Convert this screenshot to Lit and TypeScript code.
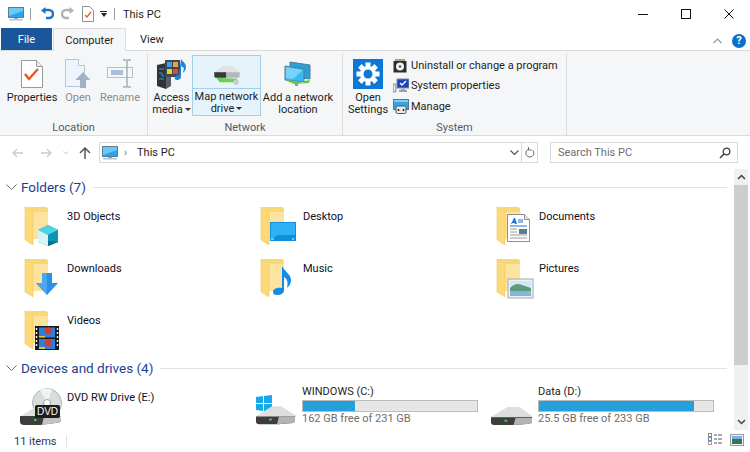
import { LitElement, html, svg, css } from "lit";
import { customElement } from "lit/decorators.js";

// small drawn icons, all hand traced from the reference
const monitor = (w: number, h: number) => html`<svg width=${w} height=${h} viewBox="0 0 16 14">
  <rect x="0.5" y="0.5" width="15" height="10" fill="#2aa4e8" stroke="#5a7d94"/>
  <path d="M1 1h14v3L1 9z" fill="#6cc8f4"/>
  <path d="M6 11h4v1H6z" fill="#9aa7b0"/>
  <path d="M1 12h14v1.500H1z" fill="#b9c4cc"/>
</svg>`;

const undo = (c: string) => html`<svg width="14" height="14" viewBox="0 0 14 14">
  <path d="M4 3h5a3.500 3.500 0 0 1 0 8H6" fill="none" stroke=${c} stroke-width="2.400"/>
  <path d="M5.500 0v7L1 3.500z" fill=${c}/>
</svg>`;

const redo = html`<svg width="14" height="14" viewBox="0 0 14 14">
  <path d="M10 3H5a3.500 3.500 0 0 0 0 8h3" fill="none" stroke="#a9b4bd" stroke-width="2.400"/>
  <path d="M8.500 0v7L13 3.500z" fill="#a9b4bd"/>
</svg>`;

const propsSmall = html`<svg width="12" height="16" viewBox="0 0 12 16">
  <path d="M.5.500h7l4 4v11H.5z" fill="#fff" stroke="#8f8f8f"/>
  <path d="M3 9l2 2 4-5" fill="none" stroke="#e2622a" stroke-width="1.400"/>
</svg>`;

const propertiesIcon = html`<svg width="22" height="28" viewBox="0 0 22 28">
  <path d="M.5.500h15l6 6v21H.5z" fill="#fff" stroke="#9a9a9a"/>
  <path d="M15.500.500v6h6" fill="#eee" stroke="#9a9a9a"/>
  <path d="M4 14l4 5 9-10" fill="none" stroke="#e8571f" stroke-width="2.400"/>
</svg>`;

const openIcon = html`<svg width="26" height="30" viewBox="0 0 26 30">
  <path d="M.5.500h13l6 6v21H.5z" fill="#eef4fb" stroke="#b4c6dc"/>
  <path d="M13.500.500v6h6" fill="#fff" stroke="#b4c6dc"/>
  <path d="M18 13l7.500 8H21v8h-6v-8h-4.500z" fill="#a3b2c2"/>
</svg>`;

const renameIcon = html`<svg width="27" height="30" viewBox="0 0 27 30">
  <rect x="0.500" y="8.500" width="25" height="10" fill="#f3f6fa" stroke="#b4c0cc"/>
  <rect x="4" y="11" width="12" height="5" fill="#a9bfd8"/>
  <path d="M16 1h3l1 1 1-1h3M20 2v25M16 28h3l1-1 1 1h3" fill="none" stroke="#a6afb8" stroke-width="1.500"/>
</svg>`;

const accessMedia = html`<svg width="31" height="30" viewBox="0 0 31 30">
  <path d="M1 6l9-2v26l-9-3z" fill="#30343a"/>
  <path d="M10 4l5 2v21l-5 3z" fill="#5a5f66"/>
  <path d="M3 10h5M3 14h3v3h2M3 20h5" stroke="#2f9be0" fill="none"/>
  <rect x="9" y="1" width="15" height="17" fill="#3f4952"/>
  <rect x="11" y="3" width="5" height="5" fill="#3ea0e8"/>
  <rect x="17" y="3" width="5" height="5" fill="#e8a43a"/>
  <rect x="11" y="10" width="5" height="5" fill="#e8d23a"/>
  <rect x="17" y="10" width="5" height="5" fill="#dc4a3a"/>
  <path d="M25 0c2 3 5 4 5 8 0 3-2 5-3 6l1-5-3-2v11c0 3-5 4-6 2-1-3 2-4 4-4z" fill="#1b86dc"/>
</svg>`;

const driveIcon = html`<svg width="41" height="19" viewBox="0 0 40 22" preserveAspectRatio="none">
  <path d="M0 13L16 1.500h12L40 12v2H0z" fill="#d4d4d4"/>
  <path d="M0 13L16 2h12l12 10z" fill="#dedede"/>
  <path d="M0 13h40v5c0 1-1 2-2 2.500L22 22H4c-2 0-4-1-4-3z" fill="#3d3d3d"/>
  <path d="M24 14h16v4c0 1-1 2-2 2.500L22 22z" fill="#b4b4b4"/>
  <rect x="13" y="16" width="3" height="2" fill="#3bd04a"/>
</svg>`;

const mapDrive = html`<svg width="30" height="19" viewBox="0 2 30 21">
  <path d="M1 9L11 2h10l8 6v2H1z" fill="#e2e2e2"/>
  <path d="M1 9h28v4c0 1-1 2-2 2H3c-1 0-2-1-2-2z" fill="#b4b8b8"/>
  <path d="M1 9h13v6H3c-1 0-2-1-2-2z" fill="#3a3a3a"/>
  <path d="M3 15l4 5h16l4 1-1-5z" fill="#6bd04f"/>
  <circle cx="25" cy="20" r="3" fill="#c9cdd0"/>
</svg>`;

const netLocation = html`<svg width="28" height="26" viewBox="0 0 28 26">
  <path d="M6 1l20 3v14l-20-2z" fill="#2b9fd8" stroke="#4d7e97"/>
  <path d="M1 5l19 3v13L1 19z" fill="#3cb8ee" stroke="#4d7e97"/>
  <path d="M2 6l17 3-10 9-7-1z" fill="#77d3f7"/>
  <path d="M3 20l7 3 15-1 1-3-6 1v2L4 19z" fill="#63c64a"/>
  <path d="M11 22h3v3h-3z" fill="#8d9aa2"/>
</svg>`;

const settingsIcon = html`<svg width="30" height="30" viewBox="0 0 30 30">
  <rect width="30" height="30" fill="#0b78d7"/>
  <g fill="#fff">
    <circle cx="15" cy="15" r="8"/>
    ${[0, 45, 90, 135, 180, 225, 270, 315].map(
      (a) => svg`<rect x="12.500" y="3.500" width="5" height="5" transform="rotate(${a} 15 15)"/>`
    )}
  </g>
  <circle cx="15" cy="15" r="4.500" fill="#0b78d7"/>
</svg>`;

const uninstallIcon = html`<svg width="14" height="15" viewBox="0 0 14 15">
  <path d="M2 1h10v2H2z" fill="#a8a488"/>
  <rect x="0.500" y="3" width="13" height="11.500" fill="#2d2d2d"/>
  <circle cx="7" cy="8.500" r="4" fill="#f0f0f0"/>
  <circle cx="7" cy="8.500" r="1.300" fill="#555"/>
</svg>`;

const sysPropsIcon = html`<svg width="16" height="15" viewBox="0 0 16 15">
  <rect x="0" y="6" width="3" height="8" fill="#dcdcdc" stroke="#666" stroke-width="0.600"/>
  <rect x="4" y="1" width="12" height="9" fill="#1c46b8" stroke="#7a8b99"/>
  <path d="M7 5l2 2 4-4" fill="none" stroke="#fff" stroke-width="1.400"/>
  <path d="M8 11h4v1h2v2H6v-2h2z" fill="#9aa2a8"/>
</svg>`;

const manageIcon = html`<svg width="16" height="15" viewBox="0 0 16 15">
  <rect x="0.500" y="0.500" width="15" height="10" fill="#33a4e6" stroke="#4c7a96"/>
  <path d="M1 1h14v2H1z" fill="#7fd0f6"/>
  <rect x="3" y="7" width="10" height="7.500" rx="1.500" fill="#e8e8e8" stroke="#555"/>
  <path d="M5.500 10v2M10.500 10v2" stroke="#222" stroke-width="1.500"/>
</svg>`;

// folder overlays, drawn in the 40x42 box of the folder icon
const overlays: Record<string, unknown> = {
  cube: svg`
    <path d="M24 19l10 5v12l-10 4-10-4V24z" fill="#1baec9"/>
    <path d="M14 24l10-5 10 5-10 5z" fill="#4fd2e4"/>
    <path d="M14 24l10 5v11l-10-4z" fill="#d6f5f7"/>
    <path d="M24 29l10-5v12l-10 4z" fill="#0e93b0"/>
    <path d="M24 35l10 1-10 4z" fill="#0a6f88"/>`,
  down: svg`<path d="M18 15h10v10h6L23 37 12 25h6z" fill="#2a8fe6"/>
    <path d="M18 15h5v22L12 25h6z" fill="#4aa8f2"/>`,
  desktop: svg`
    <rect x="10" y="16" width="26" height="19" fill="#0f8fdc"/>
    <path d="M11 17h24v12H18l-7 4z" fill="#2fb1f6"/>
    <path d="M11 33h3M32 33h2" stroke="#dff" stroke-width="1"/>`,
  docs: svg`
    <path d="M11.500 8.500h17l5 5v22h-22z" fill="#fff" stroke="#8e8e8e"/>
    <path d="M28.500 8.500v5h5" fill="#e8e8e8" stroke="#8e8e8e"/>
    <path d="M15 18l3-6h1l2 6h-2l-.500-1h-2l-.500 1z" fill="#1c74d8"/>
    <path d="M22 14h5M22 16h5M14 20h17" stroke="#1c74d8"/>
    <path d="M14 23h7M14 26h7M14 29h17M14 32h17" stroke="#9a9a9a"/>
    <rect x="23" y="23" width="8" height="5" fill="#5a7f8c"/>`,
  music: svg`<path d="M22 8c2 5 9 8 9 14 0 4-2 6-4 8 1-4 1-9-3-11v13c0 4-4 5-7 5-3 0-4-1-4-3 0-3 4-5 9-4V8z" fill="#0f8ee8"/>`,
  pictures: svg`
    <rect x="12" y="21" width="25" height="19" fill="#f0f0f0" stroke="#a8a8a8"/>
    <rect x="14" y="23" width="21" height="15" fill="#cfe8f4"/>
    <path d="M14 30c4-4 8-5 12-3l9 3v3H14z" fill="#5f9a7c"/>
    <path d="M14 33h21v5H14z" fill="#7fb8d8"/>`,
  videos: svg`
    <rect x="11" y="16" width="24" height="24" fill="#1a1a1a"/>
    <rect x="15" y="17.500" width="16" height="10" fill="#2b7fe0"/>
    <rect x="15" y="29" width="16" height="10" fill="#2b7fe0"/>
    <circle cx="24" cy="21" r="3.500" fill="#d93a2a"/>
    <circle cx="24" cy="33" r="3.500" fill="#d93a2a"/>
    <path d="M15 26h6v1.500h-6zM15 37h6v2h-6z" fill="#e8c23a"/>
    <path d="M12.500 18v20M33.500 18v20" stroke="#eee" stroke-width="1.500" stroke-dasharray="2 2"/>`,
};

const folderIcon = (kind: string) => html`<svg class="ico" width="40" height="42" viewBox="0 0 40 42">
  <path d="M1 1h21c1 0 2 1 2 2v30H9V6L1 1z" fill="#f8d775"/>
  <path d="M9 6h15v27H9z" fill="#fce39f"/>
  <path d="M1 1l8 5v33l-8-5z" fill="#fdd978" stroke="#e8c25e" stroke-width="0.500"/>
  ${overlays[kind]}
</svg>`;

const dvdIcon = html`<svg width="42" height="38" viewBox="0 0 42 38">
  <circle cx="27" cy="15" r="14.500" fill="#d8dcde" stroke="#b0b4b6"/>
  <path d="M27 15L20 2a14 14 0 0 1 12 0z" fill="#eff3f4"/>
  <circle cx="27" cy="15" r="3.500" fill="#fff" stroke="#9fa3a5"/>
  <path d="M1 28L14 20h18l8 7v2H1z" fill="#e0e0e0"/>
  <path d="M0 28h41v4c0 1-1 2-2 2.500L20 37H4c-2 0-4-1-4-3z" fill="#3d3d3d"/>
  <path d="M24 28h17v4c0 1-1 2-2 2.500L22 37z" fill="#c4c4c4"/>
  <rect x="14" y="31" width="2.500" height="2" fill="#3bd04a"/>
  <rect x="15" y="17" width="25" height="13" rx="2" fill="#1c1c1c"/>
  <text x="27.500" y="27" text-anchor="middle" font-family="Liberation Sans, sans-serif" font-size="10" fill="#fff">DVD</text>
</svg>`;

const winDrive = html`<svg width="42" height="38" viewBox="0 0 42 38">
  <path d="M1 6l7-1v7H1zM9 5l8-1v8H9zM1 13h7v7l-7-1zM9 13h8v8l-8-1z" fill="#1aa9e8"/>
  <g transform="translate(1 14) scale(1 .88)">${svg`
    <path d="M0 13L16 1.500h9L40 12v2H0z" fill="#dedede"/>
    <path d="M0 13h39v5c0 1-1 2-2 2.500L22 22H4c-2 0-4-1-4-3z" fill="#3d3d3d"/>
    <path d="M23 13h16v5c0 1-1 2-2 2.500L21 22z" fill="#b4b4b4"/>
    <rect x="13" y="15.500" width="3" height="2" fill="#3bd04a"/>`}</g>
</svg>`;

const chev = html`<svg width="11" height="6" viewBox="0 0 11 6"><path d="M.5.500l5 5 5-5" fill="none" stroke="#6d6d6d"/></svg>`;

@customElement("app-root")
export class AppRoot extends LitElement {
  static styles = css`
    :host {
      display: block;
      width: 750px;
      height: 452px;
      overflow: hidden;
      background: #fff;
      font-family: Roboto, "Noto Sans", sans-serif;
      font-size: 11px;
      color: #1e1e1e;
    }
    svg { display: block; flex: none; }

    .title {
      height: 28px;
      display: flex;
      align-items: center;
      padding-left: 8px;
    }
    .title .sep { width: 1px; height: 12px; background: #9b9b9b; margin: 0 9px 0 6px; }
    .title .qa { display: flex; align-items: center; gap: 7px; }
    .drop { width: 7px; border-top: 1px solid #222; margin-left: 6px; margin-right: 7px; padding-top: 1px; }
    .drop i { display: block; width: 0; border: 3px solid transparent; border-top: 4px solid #222; border-bottom: 0; margin-left: 1px; }
    .win { margin-left: auto; display: flex; align-items: center; }
    .win span { width: 43px; height: 28px; display: flex; align-items: center; justify-content: center; }

    .tabs { height: 23px; display: flex; align-items: flex-end; padding-left: 1px; border-bottom: 1px solid #dadbdc; box-sizing: border-box; position: relative; }
    .tab { height: 22px; display: flex; align-items: center; justify-content: center; }
    .tab.file { width: 51px; background: #19579a; color: #fff; margin-right: 1px; }
    .tab.on { width: 73px; height: 23px; margin-bottom: -1px; background: #f5f6f7; border: 1px solid #dadbdc; border-bottom: 0; box-sizing: border-box; }
    .tab.view { width: 52px; }
    .tabs .end { margin-left: auto; display: flex; align-items: center; gap: 10px; padding: 0 4px 2px 0; }
    .help { width: 14px; height: 14px; border-radius: 50%; background: #0b6fc4; color: #fff; font-weight: 700; font-size: 11px; line-height: 14px; text-align: center; }

    .ribbon { height: 85px; display: flex; background: #f5f6f7; border-bottom: 1px solid #dadbdc; box-sizing: border-box; }
    .group { display: flex; flex-direction: column; border-right: 1px solid #dcdddf; margin: 2px 0 0; box-sizing: border-box; }
    .group .body { flex: 1; display: flex; padding-top: 2px; }
    .group .label { text-align: center; height: 14px; line-height: 13px; color: #55595e; }
    .g1 { width: 148px; }
    .g2 { width: 195px; }
    .g3 { width: 224px; }
    .big { display: flex; flex-direction: column; align-items: center; text-align: center; line-height: 12px; box-sizing: border-box; white-space: nowrap; }
    .big .pic { height: 37px; display: flex; align-items: center; justify-content: center; width: 100%; }
    .big.off { color: #8b8b8b; }
    .big.hot { height: 61px; background: #e5f3fb; border: 1px solid #a4cfe9; }
    .big.hot .pic { height: 34px; border-bottom: 1px solid #a4cfe9; margin-bottom: 2px; box-sizing: border-box; align-items: flex-end; padding-bottom: 3px; }
    .arrow { display: inline-block; border: 3px solid transparent; border-top: 3px solid #333; border-bottom: 0; vertical-align: 2px; margin-left: 2px; }
    .smalls { display: flex; flex-direction: column; gap: 4.500px; padding-top: 2px; margin-left: 2px; }
    .small { display: flex; align-items: center; gap: 2px; height: 16px; }

    .nav { height: 33px; display: flex; align-items: center; box-sizing: border-box; padding: 0 12px 0 12px; }
    .nav .btns { width: 87px; display: flex; align-items: center; }
    .addr { width: 439px; height: 21px; border: 1px solid #d9d9d9; box-sizing: border-box; display: flex; align-items: center; padding-left: 2px; }
    .addr .crumb { margin: 0 0 0 6px; color: #6b6b6b; font-size: 10px; }
    .addr .path { margin-left: 10px; flex: 1; }
    .addr .dd { width: 14px; display: flex; justify-content: center; }
    .addr .rf { width: 15px; height: 19px; border-left: 1px solid #d9d9d9; display: flex; align-items: center; justify-content: center; }
    .search { width: 188px; height: 21px; margin-left: 12px; border: 1px solid #d9d9d9; box-sizing: border-box; display: flex; align-items: center; justify-content: space-between; padding: 0 6px 0 7px; color: #6d6d6d; }

    .main { height: 261px; display: flex; position: relative; }
    .content { width: 734px; overflow: hidden; }
    .scroll { width: 14px; background: #f0f0f0; display: flex; flex-direction: column; align-items: center; }
    .scroll .cap { height: 16px; display: flex; align-items: center; justify-content: center; background: #f0f0f0; }
    .scroll .thumb { width: 100%; height: 180px; background: #cdcdcd; }
    .scroll .rest { flex: 1; }

    .head { display: flex; align-items: center; height: 18px; padding-left: 6px; color: #1a3e94; font-size: 13.500px; margin-top: 9px; }
    .head .ln { flex: 1; height: 1px; background: #e3e3e3; margin: 0 7px 0 7px; }
    .head .cv { margin-right: 4px; }
    .head.next { margin-top: -3px; }
    .grid { display: grid; grid-template-columns: 236px 236px 236px; padding-left: 24px; grid-auto-rows: 52px; margin-top: 10px; }
    .item { display: flex; align-items: flex-start; }
    .item .ico { margin-right: 3px; }
    .item .nm { padding-top: 4px; color: #0e0e1e; }
    .grid.last { grid-auto-rows: auto; margin-top: 8px; padding-left: 20px; grid-template-columns: 235px 236px 235px; }
    .dvd { padding-top: 3px; }
    .dvd .nm { padding-top: 3px; margin-left: 5px; }
    .dr { display: flex; }
    .dr .pic { padding-top: 6px; width: 42px; }
    .dr .pic.plain { padding-top: 21px; }
    .dr .txt { margin-left: 5px; width: 176px; line-height: 14px; }
    .bar { height: 12px; border: 1px solid #bcbcbc; background: #e6e6e6; margin: 1px 0 0; box-sizing: border-box; }
    .bar i { display: block; height: 100%; background: #26a0da; }
    .free { color: #6d6d6d; }

    .status { height: 22px; display: flex; align-items: center; padding: 0 6px 0 14px; box-sizing: border-box; color: #1e395b; }
    .status .d { width: 1px; height: 12px; background: #e3e3e3; margin-left: 9px; }
    .status .views { margin-left: auto; margin-top: -3px; display: flex; align-items: center; gap: 7px; }
  `;

  render() {
    const folders = [
      ["3D Objects", "cube"],
      ["Desktop", "desktop"],
      ["Documents", "docs"],
      ["Downloads", "down"],
      ["Music", "music"],
      ["Pictures", "pictures"],
      ["Videos", "videos"],
    ];
    return html`
      <div class="title">
        ${monitor(16, 14)}
        <span class="sep"></span>
        <div class="qa">${undo("#1c74c4")}${redo}${propsSmall}</div>
        <span class="drop"><i></i></span>
        <span class="sep" style="margin:0 8px 0 0"></span>
        <span>This PC</span>
        <div class="win">
          <span><svg width="10" height="10"><path d="M0 5.500h10" stroke="#111"/></svg></span>
          <span><svg width="10" height="10"><rect x=".5" y=".5" width="9" height="9" fill="none" stroke="#111"/></svg></span>
          <span><svg width="10" height="10"><path d="M.5.500l9 9M9.500.500l-9 9" stroke="#111"/></svg></span>
        </div>
      </div>

      <div class="tabs">
        <div class="tab file">File</div>
        <div class="tab on">Computer</div>
        <div class="tab view">View</div>
        <div class="end">
          <svg width="9" height="6" viewBox="0 0 9 6"><path d="M.5 5l4-4 4 4" fill="none" stroke="#9a9a9a" stroke-width="1.200"/></svg>
          <div class="help">?</div>
        </div>
      </div>

      <div class="ribbon">
        <div class="group g1">
          <div class="body">
            <div class="big" style="width:56px;margin-left:4px"><div class="pic">${propertiesIcon}</div><div>Properties</div></div>
            <div class="big off" style="width:36px"><div class="pic">${openIcon}</div><div>Open</div></div>
            <div class="big off" style="width:48px"><div class="pic">${renameIcon}</div><div>Rename</div></div>
          </div>
          <div class="label">Location</div>
        </div>
        <div class="group g2">
          <div class="body">
            <div class="big" style="width:44px;padding-left:3px"><div class="pic">${accessMedia}</div><div>Access<br />media<i class="arrow"></i></div></div>
            <div class="big hot" style="width:69px"><div class="pic">${mapDrive}</div><div>Map network<br />drive<i class="arrow"></i></div></div>
            <div class="big" style="width:74px"><div class="pic">${netLocation}</div><div>Add a network<br />location</div></div>
          </div>
          <div class="label">Network</div>
        </div>
        <div class="group g3">
          <div class="body">
            <div class="big" style="width:46px;margin-left:2px"><div class="pic">${settingsIcon}</div><div>Open<br />Settings</div></div>
            <div class="smalls">
              <div class="small">${uninstallIcon}<span style="margin-left:2px">Uninstall or change a program</span></div>
              <div class="small">${sysPropsIcon}<span>System properties</span></div>
              <div class="small">${manageIcon}<span>Manage</span></div>
            </div>
          </div>
          <div class="label">System</div>
        </div>
      </div>

      <div class="nav">
        <div class="btns">
          <svg width="12" height="10" viewBox="0 0 12 10"><path d="M11 5H1M5 1L1 5l4 4" fill="none" stroke="#c9c9c9" stroke-width="1.300"/></svg>
          <svg style="margin-left:16px" width="12" height="10" viewBox="0 0 12 10"><path d="M1 5h10M7 1l4 4-4 4" fill="none" stroke="#c9c9c9" stroke-width="1.300"/></svg>
          <svg style="margin-left:11px" width="6" height="4" viewBox="0 0 6 4"><path d="M.5.500L3 3 5.500.500" fill="none" stroke="#c9c9c9"/></svg>
          <svg style="margin-left:10px" width="12" height="12" viewBox="0 0 12 12"><path d="M6 12V1M1 6l5-5 5 5" fill="none" stroke="#555" stroke-width="1.500"/></svg>
        </div>
        <div class="addr">
          ${monitor(16, 14)}
          <span class="crumb">›</span>
          <span class="path">This PC</span>
          <span class="dd"><svg width="9" height="5" viewBox="0 0 9 5"><path d="M.5.500l4 4 4-4" fill="none" stroke="#555" stroke-width="1.200"/></svg></span>
          <span class="rf"><svg width="10" height="11" viewBox="0 0 10 11"><path d="M3 2.500A4 4 0 1 0 7.500 3M3.500 0v3h3" fill="none" stroke="#666"/></svg></span>
        </div>
        <div class="search">
          <span>Search This PC</span>
          <svg width="12" height="12" viewBox="0 0 12 12"><circle cx="7.500" cy="4.500" r="3.300" fill="none" stroke="#444" stroke-width="1.300"/><path d="M5 7l-4 4" stroke="#444" stroke-width="1.600"/></svg>
        </div>
      </div>

      <div class="main">
        <div class="content">
          <div class="head"><span class="cv">${chev}</span>Folders (7)<span class="ln"></span></div>
          <div class="grid">
            ${folders.map(
              ([n, k]) => html`<div class="item">${folderIcon(k)}<span class="nm">${n}</span></div>`
            )}
          </div>
          <div class="head next"><span class="cv">${chev}</span>Devices and drives (4)<span class="ln"></span></div>
          <div class="grid last">
            <div class="item dvd">${dvdIcon}<span class="nm">DVD RW Drive (E:)</span></div>
            <div class="dr">
              <div class="pic">${winDrive}</div>
              <div class="txt">WINDOWS (C:)<div class="bar"><i style="width:30%"></i></div><span class="free">162 GB free of 231 GB</span></div>
            </div>
            <div class="dr">
              <div class="pic plain">${driveIcon}</div>
              <div class="txt">Data (D:)<div class="bar"><i style="width:89%"></i></div><span class="free">25.5 GB free of 233 GB</span></div>
            </div>
          </div>
        </div>
        <div class="scroll">
          <div class="cap"><svg width="9" height="6" viewBox="0 0 9 6"><path d="M1 5l3.500-3.500L8 5" fill="none" stroke="#444" stroke-width="1.500"/></svg></div>
          <div class="thumb"></div>
          <div class="rest"></div>
          <div class="cap"><svg width="9" height="6" viewBox="0 0 9 6"><path d="M1 1l3.500 3.500L8 1" fill="none" stroke="#444" stroke-width="1.500"/></svg></div>
        </div>
      </div>

      <div class="status">
        11 items<span class="d"></span>
        <div class="views">
          <svg width="15" height="13" viewBox="0 0 15 13"><rect x=".5" y=".5" width="3" height="3" fill="#fff" stroke="#888"/><rect x=".5" y="4.500" width="3" height="3" fill="#fff" stroke="#5a94d0"/><rect x=".5" y="8.500" width="3" height="3" fill="#fff" stroke="#d08a80"/><path d="M6 2h3M10 2h4M6 6h3M10 6h4M6 10h3M10 10h4" stroke="#555"/></svg>
          <svg width="14" height="12" viewBox="0 0 14 12"><rect x=".5" y=".5" width="13" height="11" fill="#eef3f7" stroke="#9a9a9a"/><rect x="2" y="2" width="10" height="3" fill="#6bb6e6"/><rect x="2" y="5" width="10" height="5" fill="#3e6f5a"/></svg>
        </div>
      </div>
    `;
  }
}
